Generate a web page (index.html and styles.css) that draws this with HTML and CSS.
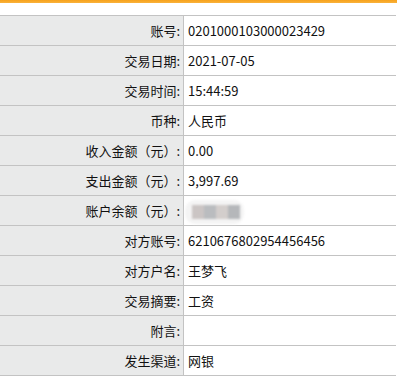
FILE: index.html
```html
<!DOCTYPE html>
<html>
<head>
<meta charset="utf-8">
<link rel="stylesheet" href="styles.css">
</head>
<body>
<div class="topbar"></div>
<div class="sheet">
  <div class="row"><div class="lbl">账号:</div><div class="val">0201000103000023429</div></div>
  <div class="row"><div class="lbl">交易日期:</div><div class="val">2021-07-05</div></div>
  <div class="row"><div class="lbl">交易时间:</div><div class="val">15:44:59</div></div>
  <div class="row"><div class="lbl">币种:</div><div class="val">人民币</div></div>
  <div class="row"><div class="lbl">收入金额（元）:</div><div class="val">0.00</div></div>
  <div class="row"><div class="lbl">支出金额（元）:</div><div class="val">3,997.69</div></div>
  <div class="row"><div class="lbl">账户余额（元）:</div><div class="val"><span class="mask"><i class="m1"></i><i class="m2"></i><i class="m3"></i><i class="m4"></i></span></div></div>
  <div class="row"><div class="lbl">对方账号:</div><div class="val">6210676802954456456</div></div>
  <div class="row"><div class="lbl">对方户名:</div><div class="val">王梦飞</div></div>
  <div class="row"><div class="lbl">交易摘要:</div><div class="val">工资</div></div>
  <div class="row"><div class="lbl">附言:</div><div class="val"></div></div>
  <div class="row"><div class="lbl">发生渠道:</div><div class="val">网银</div></div>
</div>
</body>
</html>
```
FILE: styles.css
```css
html, body { margin: 0; padding: 0; background: #fff; }
body {
  font-family: "Noto Sans CJK SC", "Noto Sans", sans-serif;
  font-size: 13px;
  color: #111;
  width: 397px;
  height: 381px;
  overflow: hidden;
}
.topbar {
  height: 3px;
  background: linear-gradient(#f7a21b, #f9b23c);
}
.sheet {
  margin-top: 12px;
  width: 396px;
  border-top: 1px solid #c3c3c3;
}
.row {
  display: grid;
  grid-template-columns: 184px 1fr;
  height: 29px;
  border-bottom: 1px solid #c3c3c3;
}
.lbl {
  background: #e9eaea;
  border-right: 1px solid #c3c3c3;
  text-align: right;
  padding-right: 3px;
  line-height: 29px;
}
.lbl, .val { white-space: nowrap; }
.val {
  padding-left: 4px;
  line-height: 29px;
}
.mask {
  display: inline-flex;
  vertical-align: middle;
  margin-left: -3px;
  padding: 5px 4px 5px 7px;
  background: #f4f4f4;
  border-radius: 10px;
  height: 14px;
  filter: blur(1px);
}
.mask i { display: block; width: 12px; height: 14px; }
.m1 { background: #cbc5c4; }
.m2 { background: #babcbf; }
.m3 { background: #d3cecc; }
.m4 { background: #b5b7ba; }
```
